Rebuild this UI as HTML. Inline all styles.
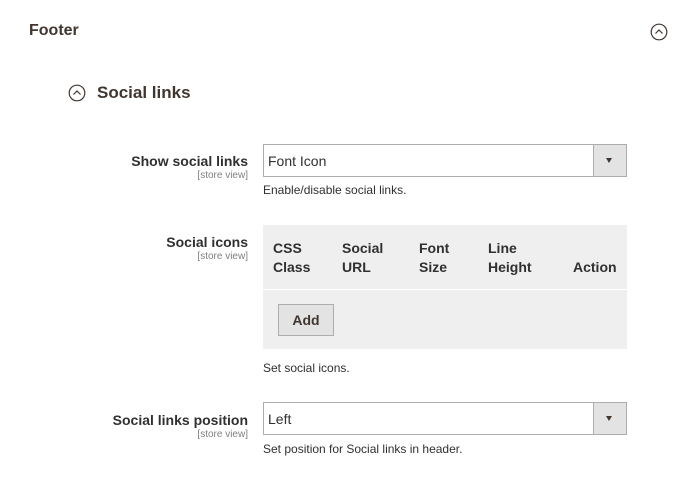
<!DOCTYPE html>
<html><head><style>
body{margin:0;width:685px;height:480px;background:#fff;font-family:"Liberation Sans",sans-serif;color:#303030;position:relative;overflow:hidden}
.a{position:absolute;white-space:nowrap}
.lbl{right:437px;font-size:14px;font-weight:bold;color:#303030;text-align:right}
.sv{right:437px;font-size:10px;color:#808080}
.sel{position:absolute;left:263px;width:362px;height:31px;border:1px solid #adadad;background:#fff}
.sel span{position:absolute;left:4px;top:8px;font-size:14px;color:#303030}
.sel i{position:absolute;right:0;top:0;width:32px;height:31px;background:#e3e3e3;border-left:1px solid #adadad}
.sel i:after{content:"";position:absolute;left:12px;top:13px;border:3.5px solid transparent;border-top:5px solid #41362f}
.note{left:263px;font-size:12px;color:#303030}
.th{font-size:14px;font-weight:bold;color:#303030;line-height:19px}
</style></head><body>
<div class="a" style="left:29px;top:22px;font-size:16px;font-weight:bold;color:#41362f">Footer</div>
<svg class="a" style="left:650px;top:23px" width="18" height="18"><circle cx="9" cy="9" r="7.8" fill="none" stroke="#41362f" stroke-width="1.2"/><path d="M5.5 10.5 L9 7 L12.5 10.5" fill="none" stroke="#41362f" stroke-width="1.2"/></svg>
<svg class="a" style="left:68px;top:84px" width="18" height="18"><circle cx="9" cy="9" r="7.8" fill="none" stroke="#41362f" stroke-width="1.2"/><path d="M5.5 10.5 L9 7 L12.5 10.5" fill="none" stroke="#41362f" stroke-width="1.2"/></svg>
<div class="a" style="left:97px;top:83px;font-size:17px;font-weight:bold;color:#41362f">Social links</div>

<div class="a lbl" style="top:153px">Show social links</div>
<div class="a sv" style="top:170px">[store view]</div>
<div class="sel" style="top:144px"><span>Font Icon</span><i></i></div>
<div class="a note" style="top:183px">Enable/disable social links.</div>

<div class="a lbl" style="top:234px">Social icons</div>
<div class="a sv" style="top:251px">[store view]</div>
<div class="a" style="left:263px;top:225px;width:364px;height:124px;background:#efefef">
<div style="position:absolute;left:0;top:64px;width:364px;height:1px;background:#fff"></div>
<div class="a th" style="left:10px;top:14px">CSS<br>Class</div>
<div class="a th" style="left:79px;top:14px">Social<br>URL</div>
<div class="a th" style="left:156px;top:14px">Font<br>Size</div>
<div class="a th" style="left:225px;top:14px">Line<br>Height</div>
<div class="a th" style="left:310px;top:33px">Action</div>
<div class="a" style="left:15px;top:79px;width:54px;height:30px;border:1px solid #adadad;background:#e3e3e3;font-size:14px;font-weight:bold;color:#41362f;text-align:center;line-height:30px">Add</div>
</div>
<div class="a note" style="top:361px">Set social icons.</div>

<div class="a lbl" style="top:412px">Social links position</div>
<div class="a sv" style="top:429px">[store view]</div>
<div class="sel" style="top:402px"><span>Left</span><i></i></div>
<div class="a note" style="top:442px">Set position for Social links in header.</div>
</body></html>
